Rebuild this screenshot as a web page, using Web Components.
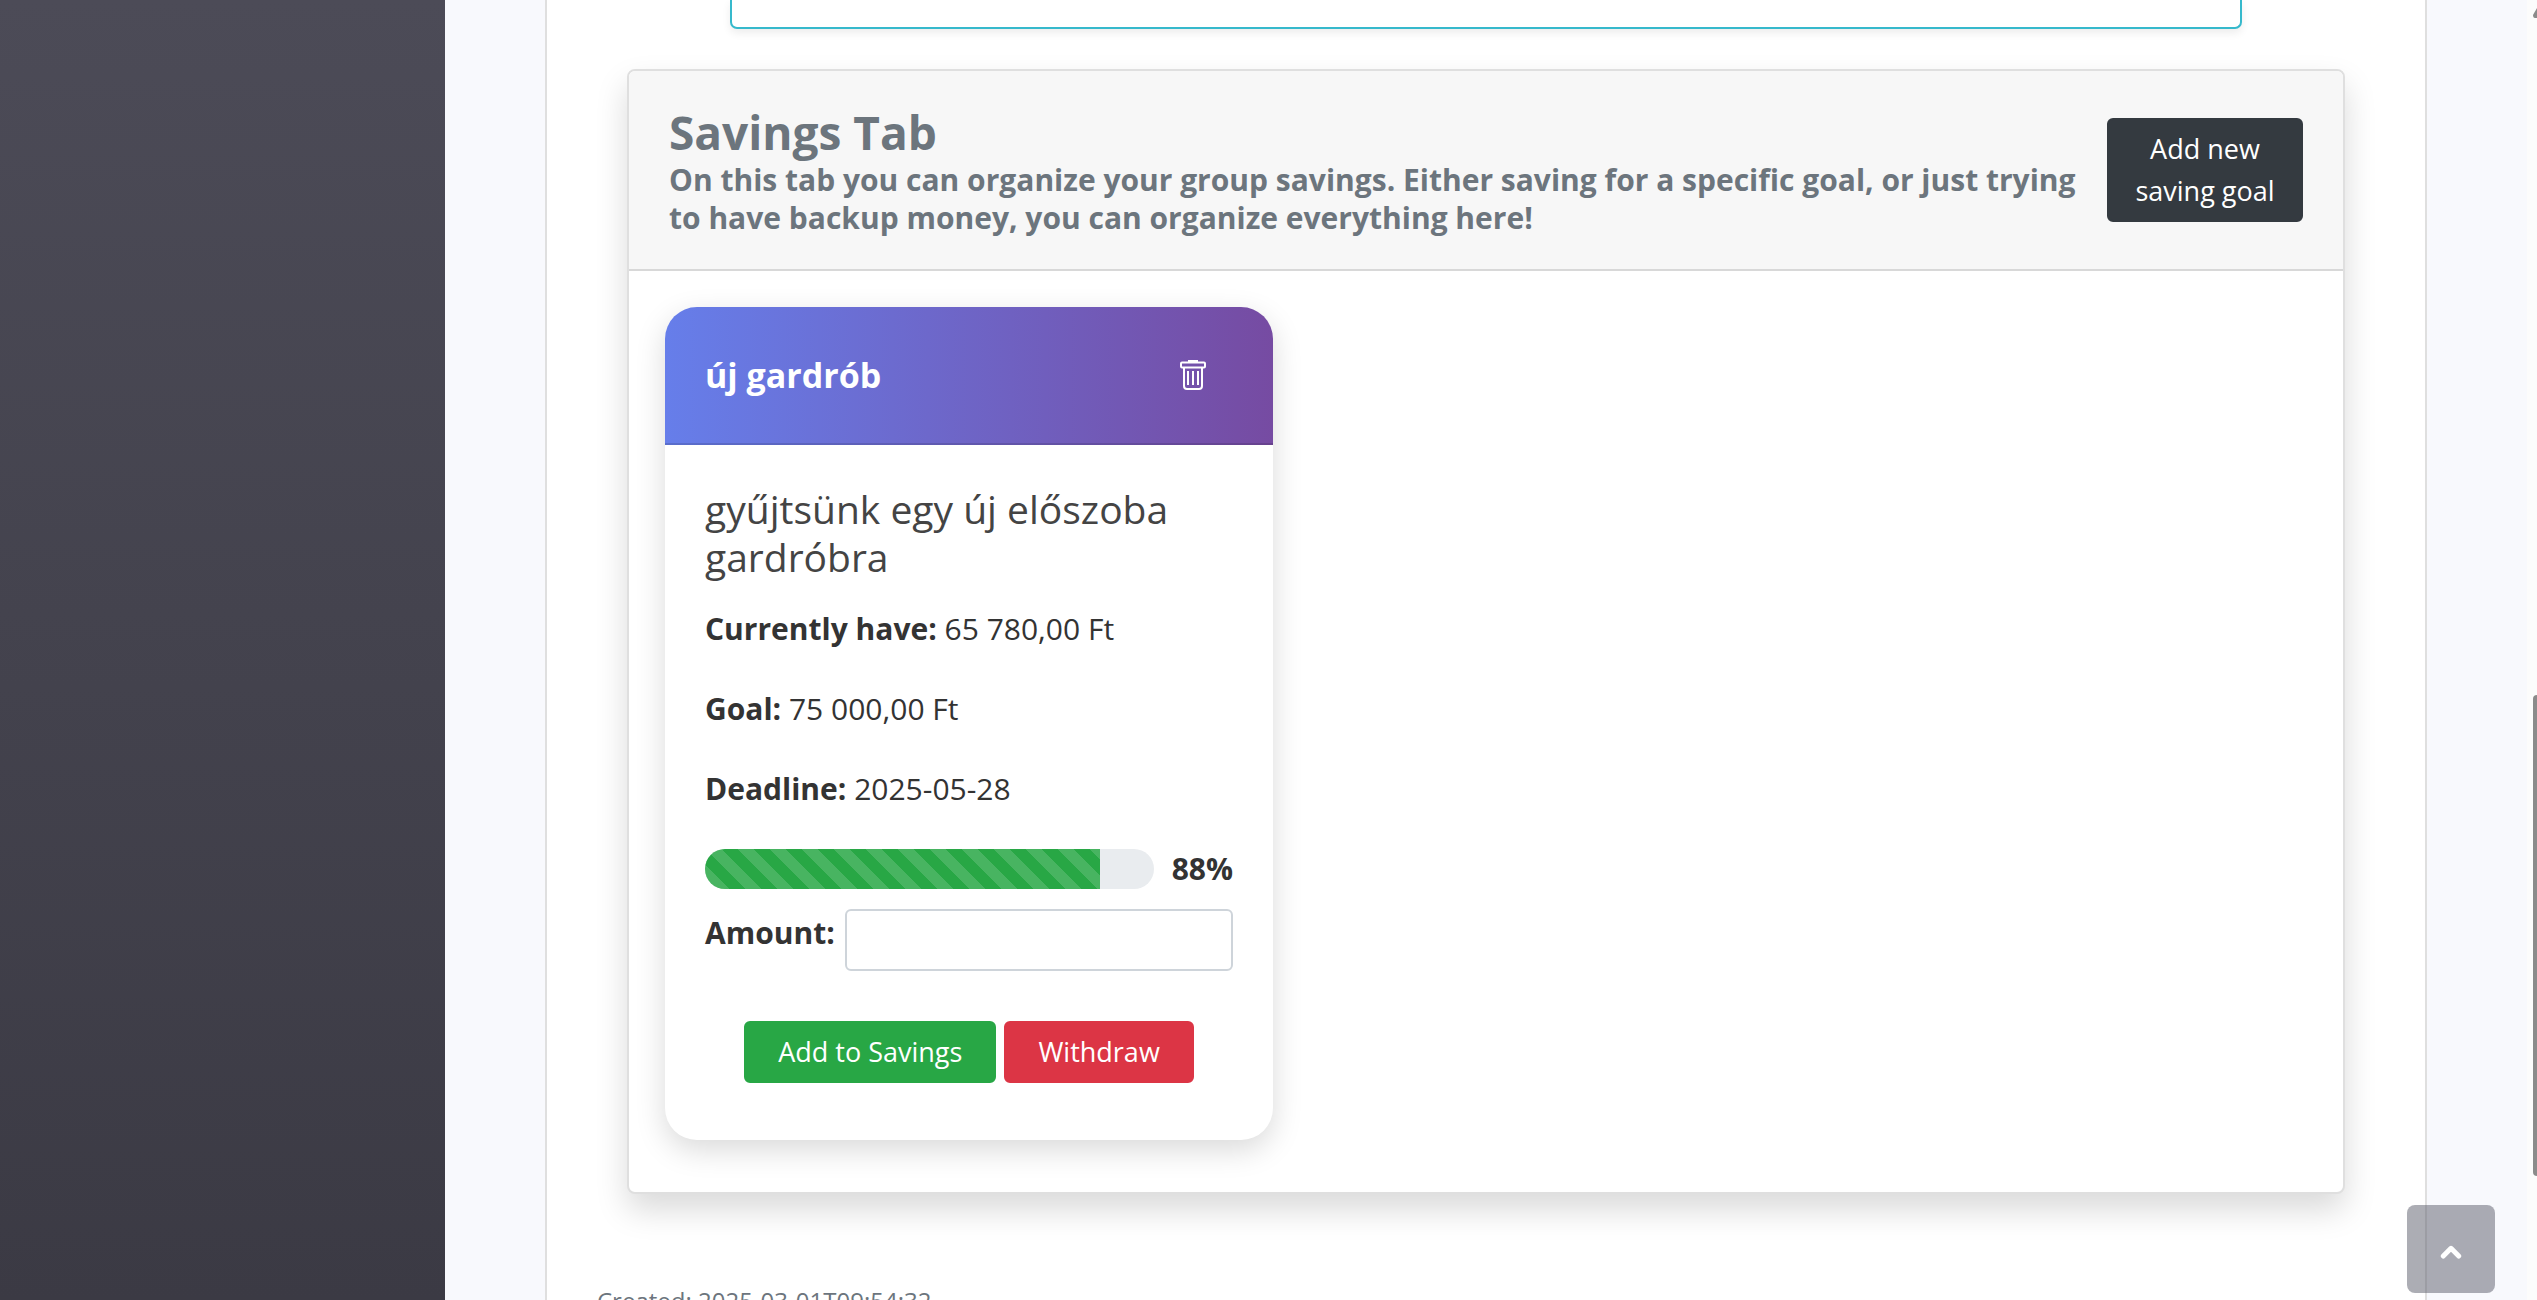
<!DOCTYPE html>
<html lang="en">
<head>
<meta charset="utf-8">
<title>Savings</title>
<style>
html{height:100%}
body{margin:0;height:100%;overflow:hidden;font-family:"Open Sans","Noto Sans",sans-serif;font-size:30px;line-height:48px;color:#333}
</style>
</head>
<body>
<app-shell>
  <info-card></info-card>
  <savings-tab>
    <span slot="title">Savings Tab</span>
    <span slot="text">On this tab you can organize your group savings. Either saving for a specific goal, or just trying to have backup money, you can organize everything here!</span>
    <saving-goal percent="88">
      <span slot="name">új gardrób</span>
      <span slot="about">gyűjtsünk egy új előszoba gardróbra</span>
      <span slot="have">65 780,00 Ft</span>
      <span slot="goal">75 000,00 Ft</span>
      <span slot="deadline">2025-05-28</span>
    </saving-goal>
  </savings-tab>
  <span slot="footer">Created: 2025-03-01T09:54:32</span>
</app-shell>
<script>
class BaseElement extends HTMLElement {
  constructor() {
    super();
    this.attachShadow({ mode: "open" }).innerHTML = "<style>*{box-sizing:border-box}" + this.constructor.css + "</style>" + this.constructor.html;
  }
}

class AppShell extends BaseElement {
  static css = `
    :host{display:flex;height:100%;background:#f8f9fd}
    nav{flex:0 0 445px;background:linear-gradient(#4c4b57,#3b3a44)}
    main{flex:1;min-width:0;padding:0 100px;overflow:hidden}
    .sheet{background:#fff;border:solid #dfdfdf;border-width:0 2px;height:100%;padding:0 80px;display:flex;flex-direction:column;overflow:hidden}
    footer{margin:88px -30px 0;font-size:24px;line-height:38px;color:#6c757d;white-space:nowrap}
    page-scrollbar{flex:0 0 10px}
    top-button{position:fixed;right:42px;bottom:7px}`;
  static html = `<nav aria-label="Sidebar"></nav>
    <main><div class="sheet"><slot></slot><footer><slot name="footer"></slot></footer></div></main>
    <page-scrollbar></page-scrollbar><top-button></top-button>`;
}

class PageScrollbar extends BaseElement {
  static css = `
    :host{display:flex;flex-direction:column;align-items:flex-end;background:#fcfcfc;overflow:hidden}
    svg{display:block;width:4px;height:18px}
    i{width:4px;height:481px;margin-top:677px;border-radius:6px 0 0 6px;background:#8b8b8b}`;
  static html = `<svg viewBox="0 0 4 18"><path d="M4 8 0 15q0 3 2 3h2z" fill="#8b8b8b"/></svg><i></i>`;
}

class TopButton extends BaseElement {
  static css = `
    :host{display:block}
    a{display:flex;align-items:center;justify-content:center;width:88px;height:88px;border-radius:8px;background:rgba(90,92,105,.5)}
    svg{width:22px;height:14px;margin-top:6px}`;
  static html = `<a href="#" aria-label="Scroll to top"><svg viewBox="0 0 22 14"><path d="M3.3 11 11 3.3 18.700 11" fill="none" stroke="#fff" stroke-width="5" stroke-linecap="round" stroke-linejoin="round"/></svg></a>`;
}

class InfoCard extends BaseElement {
  static css = `:host{display:block;box-sizing:border-box;flex:none;height:29px;margin:0 103px;border:2px solid #36b9cc;border-top:0;border-radius:0 0 7px 7px;background:#fff;box-shadow:0 4px 8px rgba(0,0,0,.075)}`;
  static html = ``;
}

class SavingsTab extends BaseElement {
  static css = `
    :host{display:block;flex:none;margin-top:40px;border:2px solid #dfdfdf;border-radius:8px;background:#fff;box-shadow:0 16px 32px rgba(0,0,0,.15)}
    header{display:flex;align-items:center;gap:10px;padding:32px 40px;background:#f7f7f7;border-bottom:2px solid #d8d8d8;border-radius:6px 6px 0 0;color:#6c757d}
    .text{flex:1}
    h3,h5{margin:0;font-weight:700}
    h3{font-size:46px;line-height:58px}
    h5{font-size:30px;line-height:38px}
    button{width:196px;padding:8px 16px;border:2px solid #343a40;border-radius:6px;background:#343a40;color:#fff;font:27px/42px "Open Sans","Noto Sans",sans-serif}
    .body{display:flex;flex-wrap:wrap;padding:36px 36px 52px}`;
  static html = `<header><div class="text"><h3><slot name="title"></slot></h3><h5><slot name="text"></slot></h5></div>
    <button type="button">Add new saving goal</button></header>
    <div class="body"><slot></slot></div>`;
}

class SavingGoal extends BaseElement {
  static css = `
    :host{display:block;width:608px;border-radius:32px;background:#fff;box-shadow:0 10px 30px rgba(0,0,0,.15);overflow:hidden}
    header{display:flex;align-items:center;justify-content:space-between;height:138px;padding:0 67px 0 40px;border-bottom:2px solid rgba(0,0,0,.125);background:linear-gradient(90deg,#667eea,#764ba2) border-box;color:#fff}
    h4{margin:0;font-size:34px;line-height:40px;font-weight:700}
    header button{border:0;background:none;padding:0;color:#fff}
    header svg{display:block;width:26px;height:30px}
    .body{padding:40px 40px 57px}
    h5{margin:0 0 24px;font-size:39px;line-height:48px;font-weight:500;color:#444}
    p{margin:0 0 32px;white-space:nowrap}
    .progress{display:flex;align-items:center;gap:18px}
    .bar{flex:1;height:40px;border-radius:20px;background:#e9ecef;overflow:hidden}
    .fill{height:100%;background:linear-gradient(45deg,rgba(255,255,255,.15) 25%,transparent 25%,transparent 50%,rgba(255,255,255,.15) 50%,rgba(255,255,255,.15) 75%,transparent 75%,transparent) 0 0/32px 32px #28a745}
    .amount{display:flex;gap:10px;margin-top:16px;font-weight:700}
    input{flex:1;min-width:0;height:62px;padding:8px 16px;border:2px solid #ced4da;border-radius:6px;background:#fff;font:28px/42px "Open Sans",sans-serif}
    .actions{display:flex;justify-content:center;gap:8px;margin-top:50px}
    .actions button{padding:8px 32px;border:2px solid;border-radius:6px;color:#fff;font:27px/42px "Open Sans","Noto Sans",sans-serif}
    .add{background:#28a745;border-color:#28a745 !important}
    .draw{background:#dc3545;border-color:#dc3545 !important}`;
  static html = `<header><h4><slot name="name"></slot></h4>
    <button type="button" aria-label="Delete"><svg viewBox="0 0 26 30" fill="none" stroke="#fff" stroke-width="2"><path d="M1 3.500q0-1 1-1h22q1 0 1 1v3q0 1-1 1H2q-1 0-1-1zM9 2.500V1h8v1.500M4 7.500V26q0 3 3 3h12q3 0 3-3V7.500M8 11v14M13 11v14M18 11v14"/></svg></button></header>
    <div class="body"><h5><slot name="about"></slot></h5>
    <p><b>Currently have:</b> <slot name="have"></slot></p>
    <p><b>Goal:</b> <slot name="goal"></slot></p>
    <p><b>Deadline:</b> <slot name="deadline"></slot></p>
    <div class="progress"><div class="bar"><div class="fill"></div></div><b class="pct"></b></div>
    <div class="amount"><label for="amount">Amount:</label><input id="amount" type="text"></div>
    <div class="actions"><button type="button" class="add">Add to Savings</button><button type="button" class="draw">Withdraw</button></div></div>`;
  connectedCallback() {
    const pct = this.getAttribute("percent") + "%";
    this.shadowRoot.querySelector(".fill").style.width = pct;
    this.shadowRoot.querySelector(".pct").textContent = pct;
  }
}

customElements.define("page-scrollbar", PageScrollbar);
customElements.define("top-button", TopButton);
customElements.define("info-card", InfoCard);
customElements.define("saving-goal", SavingGoal);
customElements.define("savings-tab", SavingsTab);
customElements.define("app-shell", AppShell);
</script>
</body>
</html>
